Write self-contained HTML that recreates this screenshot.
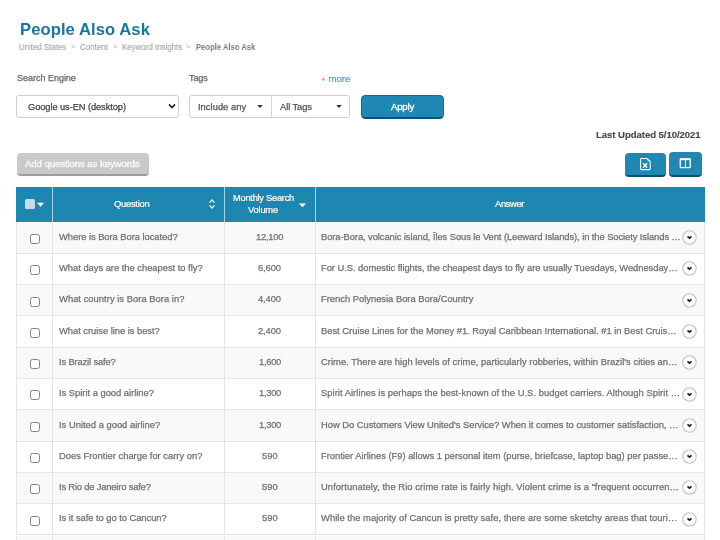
<!DOCTYPE html>
<html><head><meta charset="utf-8"><style>
*{margin:0;padding:0;box-sizing:border-box}
html,body{width:720px;height:540px;overflow:hidden;background:#fff}
body{position:relative;font-family:"Liberation Sans", sans-serif}
.t{position:absolute;line-height:0;white-space:nowrap;will-change:transform}
.b{position:absolute}
</style></head>
<body>
<div class="b" style="left:16px;top:95px;width:162.5px;height:22.5px;border:1px solid #cfcfcf;border-radius:3px;background:#fff"></div>
<svg class="b" style="left:166px;top:101px" width="12" height="10" viewBox="0 0 12 10"><path d="M3 3.4 L6 6.6 L9 3.4" fill="none" stroke="#222" stroke-width="1.6"/></svg>
<div class="b" style="left:189px;top:95px;width:161px;height:22.5px;border:1px solid #cfcfcf;border-radius:3px;background:#fff"></div>
<div class="b" style="left:270.5px;top:96px;width:1px;height:20.5px;background:#d5d5d5"></div>
<svg class="b" style="left:255px;top:102px" width="10" height="8" viewBox="0 0 10 8"><path d="M2.2 3 L7.8 3 L5 6 Z" fill="#333"/></svg>
<svg class="b" style="left:333.5px;top:102px" width="10" height="8" viewBox="0 0 10 8"><path d="M2.2 3 L7.8 3 L5 6 Z" fill="#333"/></svg>
<div class="b" style="left:361.1px;top:95.2px;width:83.4px;height:24.2px;background:#1f87b1;border:1px solid #146d91;border-bottom:2.6px solid #0e4f69;border-radius:4.5px"></div>
<div class="b" style="left:16.5px;top:152.6px;width:132.5px;height:23.2px;background:#c9c9c9;border-bottom:2.5px solid #9d9d9d;border-radius:4px"></div>
<div class="b" style="left:625px;top:153px;width:41px;height:23.8px;background:#1f87b1;border-bottom:2px solid #0e4f69;border-radius:4px"></div>
<div class="b" style="left:668.8px;top:152.4px;width:33.2px;height:24.4px;background:#1f87b1;border-bottom:2px solid #0e4f69;border-radius:4px"></div>
<svg class="b" style="left:635px;top:154px" width="22" height="20" viewBox="0 0 22 20"><path d="M5.6 5.2 Q5.6 4.4 6.4 4.4 H11.9 L15.2 7.4 V14.8 Q15.2 15.6 14.4 15.6 H6.4 Q5.6 15.6 5.6 14.8 Z" fill="none" stroke="#fff" stroke-width="1.05" stroke-linejoin="round"/><path d="M11.9 4.6 Q12.2 7 15 7.2" fill="none" stroke="#fff" stroke-width="0.9"/><path d="M8.1 9.3 L12.2 13.8 M12.2 9.3 L8.1 13.8" stroke="#fff" stroke-width="1.4"/></svg>
<svg class="b" style="left:674px;top:154px" width="22" height="20" viewBox="0 0 22 20"><rect x="6.25" y="5.2" width="10" height="8.5" rx="0.9" fill="none" stroke="#fff" stroke-width="1.3"/><path d="M5.8 5.2 H16.7" stroke="#fff" stroke-width="1.9"/><path d="M11.5 5 V13.8" stroke="#fff" stroke-width="1.05"/></svg>
<div class="b" style="left:16.4px;top:187.2px;width:688.4px;height:34.5px;background:#1e87b1"></div>
<div class="b" style="left:51.9px;top:187.2px;width:1px;height:34.5px;background:#a9d2e2"></div>
<div class="b" style="left:224.2px;top:187.2px;width:1px;height:34.5px;background:#a9d2e2"></div>
<div class="b" style="left:314.5px;top:187.2px;width:1px;height:34.5px;background:#a9d2e2"></div>
<div class="b" style="left:25.4px;top:199.4px;width:9.2px;height:9.2px;background:#c2dde8;border-radius:1.5px"></div>
<svg class="b" style="left:36px;top:201px" width="9" height="7" viewBox="0 0 9 7"><path d="M1 1.8 H8 L4.5 5.8 Z" fill="#fff"/></svg>
<svg class="b" style="left:206px;top:198px" width="12" height="12" viewBox="0 0 12 12"><path d="M3.5 4.6 L6 2 L8.5 4.6 M3.5 7.4 L6 10 L8.5 7.4" fill="none" stroke="#eef6fa" stroke-width="1.35"/></svg>
<svg class="b" style="left:297px;top:201px" width="11" height="8" viewBox="0 0 11 8"><path d="M2 2.5 H9 L5.5 6.2 Z" fill="#fff"/></svg>
<div class="b" style="left:16.4px;top:221.70px;width:688.4px;height:32.10px;background:#f9f9f9;border-left:1px solid #e3e3e3;border-right:1px solid #e3e3e3;border-bottom:1px solid #e4e4e4"></div>
<div class="b" style="left:51.9px;top:221.70px;width:1px;height:32.10px;background:#e3e3e3"></div>
<div class="b" style="left:224.2px;top:221.70px;width:1px;height:32.10px;background:#e3e3e3"></div>
<div class="b" style="left:314.5px;top:221.70px;width:1px;height:32.10px;background:#e3e3e3"></div>
<div class="b" style="left:29.9px;top:233.90px;width:10px;height:10px;border:1.2px solid #858585;border-radius:2.5px;background:#fff"></div>
<svg class="b" style="left:682.4px;top:230.00px" width="15" height="15" viewBox="0 0 15 15"><circle cx="7.5" cy="7.5" r="6.7" fill="#fff" stroke="#c2c2c2" stroke-width="1.1"/><path d="M5.5 6.4 L7.5 8.2 L9.5 6.4" fill="none" stroke="#1a1a1a" stroke-width="1.6"/></svg>
<div class="b" style="left:16.4px;top:253.80px;width:688.4px;height:31.30px;background:#ffffff;border-left:1px solid #e3e3e3;border-right:1px solid #e3e3e3;border-bottom:1px solid #e4e4e4"></div>
<div class="b" style="left:51.9px;top:253.80px;width:1px;height:31.30px;background:#e3e3e3"></div>
<div class="b" style="left:224.2px;top:253.80px;width:1px;height:31.30px;background:#e3e3e3"></div>
<div class="b" style="left:314.5px;top:253.80px;width:1px;height:31.30px;background:#e3e3e3"></div>
<div class="b" style="left:29.9px;top:265.20px;width:10px;height:10px;border:1.2px solid #858585;border-radius:2.5px;background:#fff"></div>
<svg class="b" style="left:682.4px;top:261.30px" width="15" height="15" viewBox="0 0 15 15"><circle cx="7.5" cy="7.5" r="6.7" fill="#fff" stroke="#c2c2c2" stroke-width="1.1"/><path d="M5.5 6.4 L7.5 8.2 L9.5 6.4" fill="none" stroke="#1a1a1a" stroke-width="1.6"/></svg>
<div class="b" style="left:16.4px;top:285.10px;width:688.4px;height:31.30px;background:#f9f9f9;border-left:1px solid #e3e3e3;border-right:1px solid #e3e3e3;border-bottom:1px solid #e4e4e4"></div>
<div class="b" style="left:51.9px;top:285.10px;width:1px;height:31.30px;background:#e3e3e3"></div>
<div class="b" style="left:224.2px;top:285.10px;width:1px;height:31.30px;background:#e3e3e3"></div>
<div class="b" style="left:314.5px;top:285.10px;width:1px;height:31.30px;background:#e3e3e3"></div>
<div class="b" style="left:29.9px;top:296.50px;width:10px;height:10px;border:1.2px solid #858585;border-radius:2.5px;background:#fff"></div>
<svg class="b" style="left:682.4px;top:292.60px" width="15" height="15" viewBox="0 0 15 15"><circle cx="7.5" cy="7.5" r="6.7" fill="#fff" stroke="#c2c2c2" stroke-width="1.1"/><path d="M5.5 6.4 L7.5 8.2 L9.5 6.4" fill="none" stroke="#1a1a1a" stroke-width="1.6"/></svg>
<div class="b" style="left:16.4px;top:316.40px;width:688.4px;height:31.30px;background:#ffffff;border-left:1px solid #e3e3e3;border-right:1px solid #e3e3e3;border-bottom:1px solid #e4e4e4"></div>
<div class="b" style="left:51.9px;top:316.40px;width:1px;height:31.30px;background:#e3e3e3"></div>
<div class="b" style="left:224.2px;top:316.40px;width:1px;height:31.30px;background:#e3e3e3"></div>
<div class="b" style="left:314.5px;top:316.40px;width:1px;height:31.30px;background:#e3e3e3"></div>
<div class="b" style="left:29.9px;top:327.80px;width:10px;height:10px;border:1.2px solid #858585;border-radius:2.5px;background:#fff"></div>
<svg class="b" style="left:682.4px;top:323.90px" width="15" height="15" viewBox="0 0 15 15"><circle cx="7.5" cy="7.5" r="6.7" fill="#fff" stroke="#c2c2c2" stroke-width="1.1"/><path d="M5.5 6.4 L7.5 8.2 L9.5 6.4" fill="none" stroke="#1a1a1a" stroke-width="1.6"/></svg>
<div class="b" style="left:16.4px;top:347.70px;width:688.4px;height:31.30px;background:#f9f9f9;border-left:1px solid #e3e3e3;border-right:1px solid #e3e3e3;border-bottom:1px solid #e4e4e4"></div>
<div class="b" style="left:51.9px;top:347.70px;width:1px;height:31.30px;background:#e3e3e3"></div>
<div class="b" style="left:224.2px;top:347.70px;width:1px;height:31.30px;background:#e3e3e3"></div>
<div class="b" style="left:314.5px;top:347.70px;width:1px;height:31.30px;background:#e3e3e3"></div>
<div class="b" style="left:29.9px;top:359.10px;width:10px;height:10px;border:1.2px solid #858585;border-radius:2.5px;background:#fff"></div>
<svg class="b" style="left:682.4px;top:355.20px" width="15" height="15" viewBox="0 0 15 15"><circle cx="7.5" cy="7.5" r="6.7" fill="#fff" stroke="#c2c2c2" stroke-width="1.1"/><path d="M5.5 6.4 L7.5 8.2 L9.5 6.4" fill="none" stroke="#1a1a1a" stroke-width="1.6"/></svg>
<div class="b" style="left:16.4px;top:379.00px;width:688.4px;height:31.30px;background:#ffffff;border-left:1px solid #e3e3e3;border-right:1px solid #e3e3e3;border-bottom:1px solid #e4e4e4"></div>
<div class="b" style="left:51.9px;top:379.00px;width:1px;height:31.30px;background:#e3e3e3"></div>
<div class="b" style="left:224.2px;top:379.00px;width:1px;height:31.30px;background:#e3e3e3"></div>
<div class="b" style="left:314.5px;top:379.00px;width:1px;height:31.30px;background:#e3e3e3"></div>
<div class="b" style="left:29.9px;top:390.40px;width:10px;height:10px;border:1.2px solid #858585;border-radius:2.5px;background:#fff"></div>
<svg class="b" style="left:682.4px;top:386.50px" width="15" height="15" viewBox="0 0 15 15"><circle cx="7.5" cy="7.5" r="6.7" fill="#fff" stroke="#c2c2c2" stroke-width="1.1"/><path d="M5.5 6.4 L7.5 8.2 L9.5 6.4" fill="none" stroke="#1a1a1a" stroke-width="1.6"/></svg>
<div class="b" style="left:16.4px;top:410.30px;width:688.4px;height:31.30px;background:#f9f9f9;border-left:1px solid #e3e3e3;border-right:1px solid #e3e3e3;border-bottom:1px solid #e4e4e4"></div>
<div class="b" style="left:51.9px;top:410.30px;width:1px;height:31.30px;background:#e3e3e3"></div>
<div class="b" style="left:224.2px;top:410.30px;width:1px;height:31.30px;background:#e3e3e3"></div>
<div class="b" style="left:314.5px;top:410.30px;width:1px;height:31.30px;background:#e3e3e3"></div>
<div class="b" style="left:29.9px;top:421.70px;width:10px;height:10px;border:1.2px solid #858585;border-radius:2.5px;background:#fff"></div>
<svg class="b" style="left:682.4px;top:417.80px" width="15" height="15" viewBox="0 0 15 15"><circle cx="7.5" cy="7.5" r="6.7" fill="#fff" stroke="#c2c2c2" stroke-width="1.1"/><path d="M5.5 6.4 L7.5 8.2 L9.5 6.4" fill="none" stroke="#1a1a1a" stroke-width="1.6"/></svg>
<div class="b" style="left:16.4px;top:441.60px;width:688.4px;height:31.30px;background:#ffffff;border-left:1px solid #e3e3e3;border-right:1px solid #e3e3e3;border-bottom:1px solid #e4e4e4"></div>
<div class="b" style="left:51.9px;top:441.60px;width:1px;height:31.30px;background:#e3e3e3"></div>
<div class="b" style="left:224.2px;top:441.60px;width:1px;height:31.30px;background:#e3e3e3"></div>
<div class="b" style="left:314.5px;top:441.60px;width:1px;height:31.30px;background:#e3e3e3"></div>
<div class="b" style="left:29.9px;top:453.00px;width:10px;height:10px;border:1.2px solid #858585;border-radius:2.5px;background:#fff"></div>
<svg class="b" style="left:682.4px;top:449.10px" width="15" height="15" viewBox="0 0 15 15"><circle cx="7.5" cy="7.5" r="6.7" fill="#fff" stroke="#c2c2c2" stroke-width="1.1"/><path d="M5.5 6.4 L7.5 8.2 L9.5 6.4" fill="none" stroke="#1a1a1a" stroke-width="1.6"/></svg>
<div class="b" style="left:16.4px;top:472.90px;width:688.4px;height:31.30px;background:#f9f9f9;border-left:1px solid #e3e3e3;border-right:1px solid #e3e3e3;border-bottom:1px solid #e4e4e4"></div>
<div class="b" style="left:51.9px;top:472.90px;width:1px;height:31.30px;background:#e3e3e3"></div>
<div class="b" style="left:224.2px;top:472.90px;width:1px;height:31.30px;background:#e3e3e3"></div>
<div class="b" style="left:314.5px;top:472.90px;width:1px;height:31.30px;background:#e3e3e3"></div>
<div class="b" style="left:29.9px;top:484.30px;width:10px;height:10px;border:1.2px solid #858585;border-radius:2.5px;background:#fff"></div>
<svg class="b" style="left:682.4px;top:480.40px" width="15" height="15" viewBox="0 0 15 15"><circle cx="7.5" cy="7.5" r="6.7" fill="#fff" stroke="#c2c2c2" stroke-width="1.1"/><path d="M5.5 6.4 L7.5 8.2 L9.5 6.4" fill="none" stroke="#1a1a1a" stroke-width="1.6"/></svg>
<div class="b" style="left:16.4px;top:504.20px;width:688.4px;height:31.30px;background:#ffffff;border-left:1px solid #e3e3e3;border-right:1px solid #e3e3e3;border-bottom:1px solid #e4e4e4"></div>
<div class="b" style="left:51.9px;top:504.20px;width:1px;height:31.30px;background:#e3e3e3"></div>
<div class="b" style="left:224.2px;top:504.20px;width:1px;height:31.30px;background:#e3e3e3"></div>
<div class="b" style="left:314.5px;top:504.20px;width:1px;height:31.30px;background:#e3e3e3"></div>
<div class="b" style="left:29.9px;top:515.60px;width:10px;height:10px;border:1.2px solid #858585;border-radius:2.5px;background:#fff"></div>
<svg class="b" style="left:682.4px;top:511.70px" width="15" height="15" viewBox="0 0 15 15"><circle cx="7.5" cy="7.5" r="6.7" fill="#fff" stroke="#c2c2c2" stroke-width="1.1"/><path d="M5.5 6.4 L7.5 8.2 L9.5 6.4" fill="none" stroke="#1a1a1a" stroke-width="1.6"/></svg>
<div class="b" style="left:16.4px;top:535.50px;width:688.4px;height:31.30px;background:#f9f9f9;border-left:1px solid #e3e3e3;border-right:1px solid #e3e3e3;border-bottom:1px solid #e4e4e4"></div>
<div class="b" style="left:51.9px;top:535.50px;width:1px;height:31.30px;background:#e3e3e3"></div>
<div class="b" style="left:224.2px;top:535.50px;width:1px;height:31.30px;background:#e3e3e3"></div>
<div class="b" style="left:314.5px;top:535.50px;width:1px;height:31.30px;background:#e3e3e3"></div>
<div class="t" style="left:19.50px;top:29.85px;font-size:16.6px;color:#1876a2;font-weight:bold;letter-spacing:0.077px;">People Also Ask</div>
<div class="t" style="left:19.20px;top:46.88px;font-size:9.0px;color:#a6a6a6;font-weight:normal;letter-spacing:0.000px;-webkit-text-stroke:0.15px #a6a6a6;transform:scaleX(0.8722);transform-origin:0 0;">United States</div>
<div class="t" style="left:70.50px;top:47.23px;font-size:8.0px;color:#b8b8b8;font-weight:normal;letter-spacing:0.000px;-webkit-text-stroke:0.1px #b8b8b8;">&gt;</div>
<div class="t" style="left:80.00px;top:46.88px;font-size:9.0px;color:#a6a6a6;font-weight:normal;letter-spacing:0.000px;-webkit-text-stroke:0.15px #a6a6a6;transform:scaleX(0.8844);transform-origin:0 0;">Content</div>
<div class="t" style="left:112.50px;top:47.23px;font-size:8.0px;color:#b8b8b8;font-weight:normal;letter-spacing:0.000px;-webkit-text-stroke:0.1px #b8b8b8;">&gt;</div>
<div class="t" style="left:121.70px;top:46.88px;font-size:9.0px;color:#a6a6a6;font-weight:normal;letter-spacing:0.000px;-webkit-text-stroke:0.15px #a6a6a6;transform:scaleX(0.8783);transform-origin:0 0;">Keyword Insights</div>
<div class="t" style="left:186.40px;top:47.23px;font-size:8.0px;color:#b8b8b8;font-weight:normal;letter-spacing:0.000px;-webkit-text-stroke:0.1px #b8b8b8;">&gt;</div>
<div class="t" style="left:196.40px;top:46.95px;font-size:8.8px;color:#7d7d7d;font-weight:bold;letter-spacing:0.000px;transform:scaleX(0.8676);transform-origin:0 0;">People Also Ask</div>
<div class="t" style="left:16.70px;top:78.48px;font-size:9.0px;color:#666;font-weight:normal;letter-spacing:-0.015px;-webkit-text-stroke:0.25px #666;">Search Engine</div>
<div class="t" style="left:189.00px;top:78.48px;font-size:9.0px;color:#666;font-weight:normal;letter-spacing:-0.090px;-webkit-text-stroke:0.25px #666;">Tags</div>
<div class="t" style="left:320.80px;top:78.77px;font-size:9.6px;color:#44a2db;font-weight:normal;letter-spacing:0.030px;-webkit-text-stroke:0.2px #44a2db;"><span style="font-size:8px">+</span> more</div>
<div class="t" style="left:28.30px;top:107.48px;font-size:9.3px;color:#444;font-weight:normal;letter-spacing:-0.081px;-webkit-text-stroke:0.25px #444;">Google us-EN (desktop)</div>
<div class="t" style="left:197.50px;top:107.04px;font-size:9.4px;color:#555;font-weight:normal;letter-spacing:0.018px;-webkit-text-stroke:0.25px #555;">Include any</div>
<div class="t" style="left:279.75px;top:107.04px;font-size:9.4px;color:#555;font-weight:normal;letter-spacing:-0.096px;-webkit-text-stroke:0.25px #555;">All Tags</div>
<div class="t" style="left:390.80px;top:106.97px;font-size:9.6px;color:#fff;font-weight:normal;letter-spacing:-0.203px;-webkit-text-stroke:0.3px #fff;">Apply</div>
<div class="t" style="left:596.00px;top:135.17px;font-size:9.6px;color:#4a4a4a;font-weight:bold;letter-spacing:-0.069px;-webkit-text-stroke:0.15px #4a4a4a;">Last Updated 5/10/2021</div>
<div class="t" style="left:25.10px;top:163.57px;font-size:9.6px;color:#f8f8f8;font-weight:normal;letter-spacing:-0.079px;-webkit-text-stroke:0.4px #f8f8f8;">Add questions as keywords</div>
<div class="t" style="left:114.00px;top:203.74px;font-size:9.4px;color:#fff;font-weight:normal;letter-spacing:-0.270px;-webkit-text-stroke:0.2px #fff;">Question</div>
<div class="t" style="left:232.50px;top:198.38px;font-size:9.3px;color:#fff;font-weight:normal;letter-spacing:-0.260px;-webkit-text-stroke:0.2px #fff;">Monthly Search</div>
<div class="t" style="left:247.50px;top:210.08px;font-size:9.3px;color:#fff;font-weight:normal;letter-spacing:-0.180px;-webkit-text-stroke:0.2px #fff;">Volume</div>
<div class="t" style="left:495.00px;top:203.74px;font-size:9.4px;color:#fff;font-weight:normal;letter-spacing:-0.360px;-webkit-text-stroke:0.2px #fff;">Answer</div>
<div class="t" style="left:58.90px;top:236.74px;font-size:9.4px;color:#707070;font-weight:normal;letter-spacing:-0.048px;-webkit-text-stroke:0.25px #707070;">Where is Bora Bora located?</div>
<div class="t" style="left:256.30px;top:236.74px;font-size:9.4px;color:#707070;font-weight:normal;letter-spacing:-0.243px;-webkit-text-stroke:0.25px #707070;">12,100</div>
<div class="t" style="left:321.00px;top:236.74px;font-size:9.4px;color:#707070;font-weight:normal;letter-spacing:-0.079px;-webkit-text-stroke:0.25px #707070;">Bora-Bora, volcanic island, Îles Sous le Vent (Leeward Islands), in the Society Islands …</div>
<div class="t" style="left:58.90px;top:268.04px;font-size:9.4px;color:#707070;font-weight:normal;letter-spacing:-0.022px;-webkit-text-stroke:0.25px #707070;">What days are the cheapest to fly?</div>
<div class="t" style="left:258.40px;top:268.04px;font-size:9.4px;color:#707070;font-weight:normal;letter-spacing:-0.113px;-webkit-text-stroke:0.25px #707070;">6,600</div>
<div class="t" style="left:321.00px;top:268.04px;font-size:9.4px;color:#707070;font-weight:normal;letter-spacing:-0.046px;-webkit-text-stroke:0.25px #707070;">For U.S. domestic flights, the cheapest days to fly are usually Tuesdays, Wednesday…</div>
<div class="t" style="left:58.90px;top:299.34px;font-size:9.4px;color:#707070;font-weight:normal;letter-spacing:0.032px;-webkit-text-stroke:0.25px #707070;">What country is Bora Bora in?</div>
<div class="t" style="left:258.40px;top:299.34px;font-size:9.4px;color:#707070;font-weight:normal;letter-spacing:-0.113px;-webkit-text-stroke:0.25px #707070;">4,400</div>
<div class="t" style="left:321.00px;top:299.34px;font-size:9.4px;color:#707070;font-weight:normal;letter-spacing:-0.008px;-webkit-text-stroke:0.25px #707070;">French Polynesia Bora Bora/Country</div>
<div class="t" style="left:58.90px;top:330.64px;font-size:9.4px;color:#707070;font-weight:normal;letter-spacing:-0.034px;-webkit-text-stroke:0.25px #707070;">What cruise line is best?</div>
<div class="t" style="left:258.40px;top:330.64px;font-size:9.4px;color:#707070;font-weight:normal;letter-spacing:-0.113px;-webkit-text-stroke:0.25px #707070;">2,400</div>
<div class="t" style="left:321.00px;top:330.64px;font-size:9.4px;color:#707070;font-weight:normal;letter-spacing:-0.010px;-webkit-text-stroke:0.25px #707070;">Best Cruise Lines for the Money #1. Royal Caribbean International. #1 in Best Cruis…</div>
<div class="t" style="left:58.90px;top:361.94px;font-size:9.4px;color:#707070;font-weight:normal;letter-spacing:-0.154px;-webkit-text-stroke:0.25px #707070;">Is Brazil safe?</div>
<div class="t" style="left:259.00px;top:361.94px;font-size:9.4px;color:#707070;font-weight:normal;letter-spacing:-0.293px;-webkit-text-stroke:0.25px #707070;">1,600</div>
<div class="t" style="left:321.00px;top:361.94px;font-size:9.4px;color:#707070;font-weight:normal;letter-spacing:0.030px;-webkit-text-stroke:0.25px #707070;">Crime. There are high levels of crime, particularly robberies, within Brazil's cities an…</div>
<div class="t" style="left:58.90px;top:393.24px;font-size:9.4px;color:#707070;font-weight:normal;letter-spacing:-0.019px;-webkit-text-stroke:0.25px #707070;">Is Spirit a good airline?</div>
<div class="t" style="left:259.00px;top:393.24px;font-size:9.4px;color:#707070;font-weight:normal;letter-spacing:-0.293px;-webkit-text-stroke:0.25px #707070;">1,300</div>
<div class="t" style="left:321.00px;top:393.24px;font-size:9.4px;color:#707070;font-weight:normal;letter-spacing:0.036px;-webkit-text-stroke:0.25px #707070;">Spirit Airlines is perhaps the best-known of the U.S. budget carriers. Although Spirit …</div>
<div class="t" style="left:58.90px;top:424.54px;font-size:9.4px;color:#707070;font-weight:normal;letter-spacing:0.004px;-webkit-text-stroke:0.25px #707070;">Is United a good airline?</div>
<div class="t" style="left:259.00px;top:424.54px;font-size:9.4px;color:#707070;font-weight:normal;letter-spacing:-0.293px;-webkit-text-stroke:0.25px #707070;">1,300</div>
<div class="t" style="left:321.00px;top:424.54px;font-size:9.4px;color:#707070;font-weight:normal;letter-spacing:-0.027px;-webkit-text-stroke:0.25px #707070;">How Do Customers View United's Service? When it comes to customer satisfaction, …</div>
<div class="t" style="left:58.90px;top:455.84px;font-size:9.4px;color:#707070;font-weight:normal;letter-spacing:0.005px;-webkit-text-stroke:0.25px #707070;">Does Frontier charge for carry on?</div>
<div class="t" style="left:262.20px;top:455.84px;font-size:9.4px;color:#707070;font-weight:normal;letter-spacing:0.090px;-webkit-text-stroke:0.25px #707070;">590</div>
<div class="t" style="left:321.00px;top:455.84px;font-size:9.4px;color:#707070;font-weight:normal;letter-spacing:-0.015px;-webkit-text-stroke:0.25px #707070;">Frontier Airlines (F9) allows 1 personal item (purse, briefcase, laptop bag) per passe…</div>
<div class="t" style="left:58.90px;top:487.14px;font-size:9.4px;color:#707070;font-weight:normal;letter-spacing:-0.184px;-webkit-text-stroke:0.25px #707070;">Is Rio de Janeiro safe?</div>
<div class="t" style="left:262.20px;top:487.14px;font-size:9.4px;color:#707070;font-weight:normal;letter-spacing:0.090px;-webkit-text-stroke:0.25px #707070;">590</div>
<div class="t" style="left:321.00px;top:487.14px;font-size:9.4px;color:#707070;font-weight:normal;letter-spacing:0.076px;-webkit-text-stroke:0.25px #707070;">Unfortunately, the Rio crime rate is fairly high. Violent crime is a “frequent occurren…</div>
<div class="t" style="left:58.90px;top:518.44px;font-size:9.4px;color:#707070;font-weight:normal;letter-spacing:-0.048px;-webkit-text-stroke:0.25px #707070;">Is it safe to go to Cancun?</div>
<div class="t" style="left:262.20px;top:518.44px;font-size:9.4px;color:#707070;font-weight:normal;letter-spacing:0.090px;-webkit-text-stroke:0.25px #707070;">590</div>
<div class="t" style="left:321.00px;top:518.44px;font-size:9.4px;color:#707070;font-weight:normal;letter-spacing:0.042px;-webkit-text-stroke:0.25px #707070;">While the majority of Cancun is pretty safe, there are some sketchy areas that touri…</div>

</body></html>
